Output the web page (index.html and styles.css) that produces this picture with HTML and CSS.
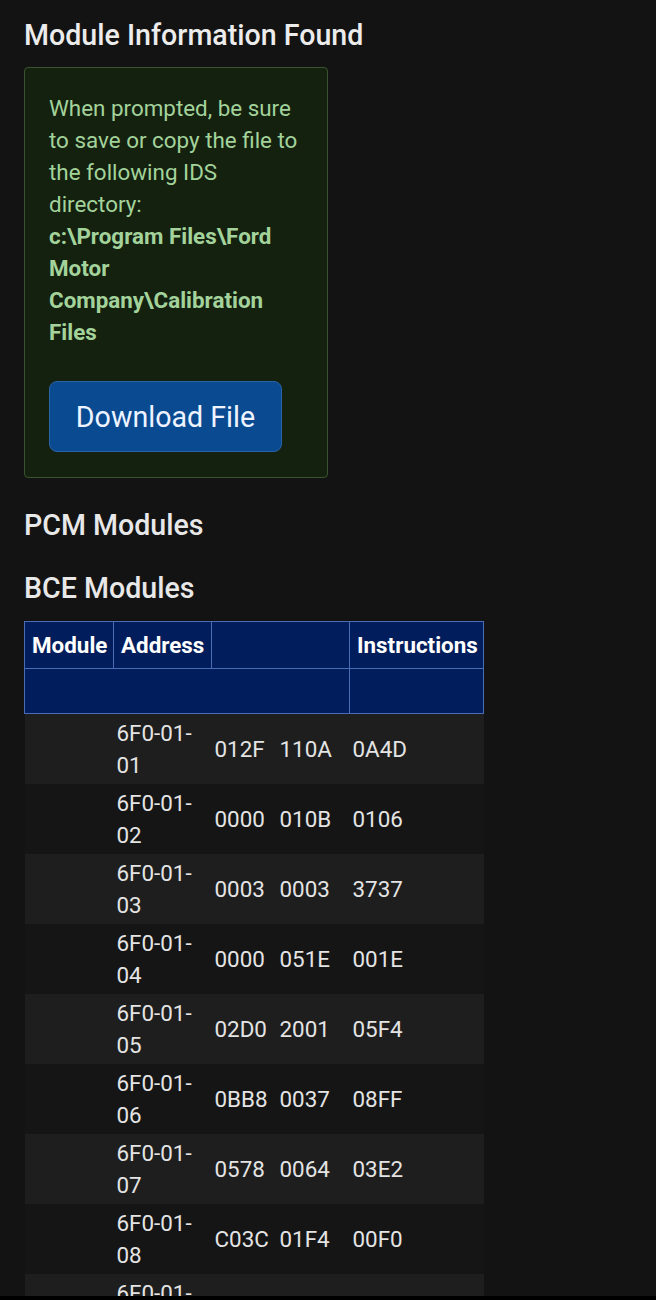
FILE: index.html
```html
<!DOCTYPE html>
<html lang="en">
<head>
<meta charset="utf-8">
<title>Module Information</title>
<link rel="stylesheet" href="styles.css">
</head>
<body>
<main class="page">
  <h2 class="title">Module Information Found</h2>
  <div class="alert">
    <p class="alert-text">When prompted, be sure to save or copy the file to the following IDS directory:<br><strong>c:\Program Files\Ford Motor Company\Calibration Files</strong></p>
    <button class="btn" type="button">Download File</button>
  </div>
  <h3 class="section">PCM Modules</h3>
  <h3 class="section">BCE Modules</h3>
  <table class="modules">
    <colgroup>
      <col class="c1"><col class="c2"><col class="c3"><col class="c4"><col class="c5">
    </colgroup>
    <thead>
      <tr class="h1">
        <th>Module</th><th>Address</th><th colspan="2"></th><th>Instructions</th>
      </tr>
      <tr class="h2">
        <th colspan="4"></th><th></th>
      </tr>
    </thead>
    <tbody>
      <tr><td></td><td>6F0-01-01</td><td>012F</td><td>110A</td><td>0A4D</td></tr>
      <tr><td></td><td>6F0-01-02</td><td>0000</td><td>010B</td><td>0106</td></tr>
      <tr><td></td><td>6F0-01-03</td><td>0003</td><td>0003</td><td>3737</td></tr>
      <tr><td></td><td>6F0-01-04</td><td>0000</td><td>051E</td><td>001E</td></tr>
      <tr><td></td><td>6F0-01-05</td><td>02D0</td><td>2001</td><td>05F4</td></tr>
      <tr><td></td><td>6F0-01-06</td><td>0BB8</td><td>0037</td><td>08FF</td></tr>
      <tr><td></td><td>6F0-01-07</td><td>0578</td><td>0064</td><td>03E2</td></tr>
      <tr><td></td><td>6F0-01-08</td><td>C03C</td><td>01F4</td><td>00F0</td></tr>
      <tr><td></td><td>6F0-01-09</td><td>0000</td><td>0000</td><td>0000</td></tr>
    </tbody>
  </table>
</main>
<div class="bottom-bar"></div>
</body>
</html>
```
FILE: styles.css
```css
html, body {
  margin: 0;
  padding: 0;
  background: #131313;
  color: #e6e6e6;
  font-family: Roboto, "Noto Sans", "Liberation Sans", sans-serif;
}

.page {
  padding: 17px 24px 40px 24px;
}

.title {
  margin: 0 0 14px 0;
  font-size: 28.6px;
  line-height: 36px;
  font-weight: 500;
  color: #ececec;
}

.alert {
  width: 304px;
  box-sizing: border-box;
  border: 1px solid #3b5230;
  border-radius: 4px;
  background: #14210f;
  padding: 24px 24px 25px 24px;
}

.alert-text {
  margin: 0 0 33px 0;
  font-size: 22.4px;
  line-height: 32px;
  color: #a3d39b;
}

.alert-text strong {
  font-weight: 700;
}

.btn {
  display: block;
  width: 233px;
  height: 71px;
  box-sizing: border-box;
  border: 1px solid #2a62a8;
  border-radius: 8px;
  background: #0a4a91;
  color: #eef4ff;
  font-family: Roboto, "Noto Sans", "Liberation Sans", sans-serif;
  font-size: 28.6px;
  font-weight: 400;
  padding: 0;
}

.section {
  margin: 0;
  font-size: 28.6px;
  line-height: 36px;
  font-weight: 500;
  color: #e8e8e8;
}

.alert + .section {
  margin-top: 29px;
}

.section + .section {
  margin-top: 27px;
}

.modules {
  margin-top: 15px;
  width: 459px;
  table-layout: fixed;
  border-collapse: collapse;
  font-size: 22.4px;
  line-height: 32px;
}

.c1 { width: 89px; }
.c2 { width: 98px; }
.c3 { width: 65px; }
.c4 { width: 73px; }
.c5 { width: 134px; }

.modules thead th {
  background: #021d5c;
  border: 1px solid #4a6cb4;
  color: #ffffff;
  font-weight: 700;
  text-align: left;
  padding: 0 7px;
  white-space: nowrap;
  overflow: hidden;
}

.modules .h1 th {
  height: 46px;
}

.modules .h2 th {
  height: 44px;
}

.modules td {
  padding: 3px 3px;
  height: 64px;
  color: #e4e4e4;
  vertical-align: middle;
}

.modules tbody tr:nth-child(odd) {
  background: #1e1e1e;
}

.modules tbody tr:nth-child(even) {
  background: #151515;
}

.bottom-bar {
  position: fixed;
  left: 0;
  right: 0;
  bottom: 0;
  height: 4px;
  background: #000000;
}
```
